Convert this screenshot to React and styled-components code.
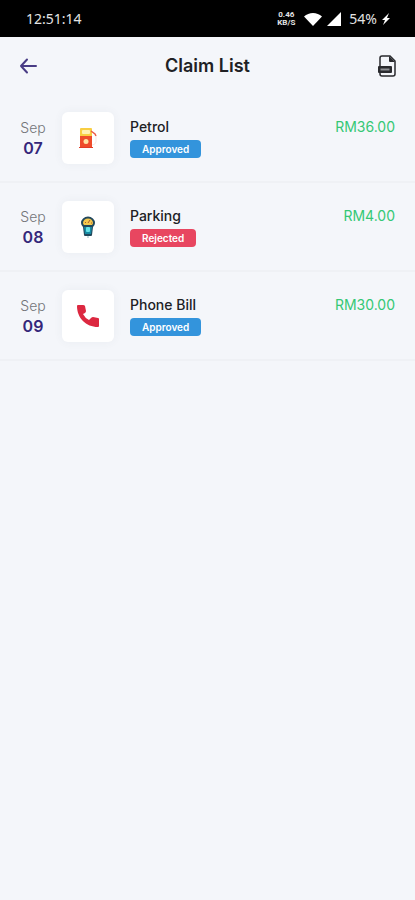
import React from "react";
import styled, { createGlobalStyle } from "styled-components";

const GlobalStyle = createGlobalStyle`
  * {
    box-sizing: border-box;
  }

  body {
    margin: 0;
    background-color: #f4f6fa;
    font-family: Inter, "Open Sans", sans-serif;
    color: #202124;
  }
`;

const Page = styled.div`
  min-height: 100vh;
  background-color: #f4f6fa;
`;

const StatusBar = styled.div`
  display: flex;
  align-items: center;
  justify-content: space-between;
  height: 37px;
  padding: 0 24px 0 26px;
  background-color: #000;
  color: #e4e4e4;
  font-family: "Noto Sans", sans-serif;
  font-size: 14px;
  line-height: 20px;
`;

const StatusIcons = styled.div`
  display: flex;
  align-items: center;
  gap: 4px;
`;

const Speed = styled.div`
  display: flex;
  flex-direction: column;
  align-items: center;
  margin-right: 4px;
  font-family: Roboto, sans-serif;
  font-size: 8px;
  font-weight: 700;
  line-height: 8px;
`;

const Battery = styled.span`
  margin-left: 4px;
`;

const Header = styled.header`
  display: grid;
  grid-template-columns: 24px 1fr 24px;
  align-items: center;
  height: 57px;
  padding: 0 16px;
`;

const Title = styled.h1`
  margin: 0;
  font-size: 18px;
  font-weight: 600;
  line-height: 24px;
  text-align: center;
`;

const IconButton = styled.button`
  display: flex;
  align-items: center;
  justify-content: center;
  width: 24px;
  height: 24px;
  padding: 0;
  border: none;
  background: none;
  cursor: pointer;
`;

const List = styled.ul`
  margin: 0;
  padding: 0;
  list-style: none;
`;

const Row = styled.li`
  display: flex;
  align-items: center;
  height: 89px;
  padding: 0 20px;
  border-bottom: 2px solid #eff1f5;
`;

const DateBox = styled.div`
  display: flex;
  flex-direction: column;
  align-items: center;
  width: 26px;
  margin-right: 16px;
  line-height: 20px;
`;

const Month = styled.span`
  color: #737579;
  font-size: 14px;
  font-weight: 300;
`;

const Day = styled.span`
  color: #35277a;
  font-size: 16px;
  font-weight: 600;
`;

const Tile = styled.div`
  display: flex;
  align-items: center;
  justify-content: center;
  width: 52px;
  height: 52px;
  margin-right: 16px;
  border-radius: 6px;
  background-color: #fff;
  box-shadow: 0 0 10px rgba(70, 80, 110, 0.06);
`;

const Info = styled.div`
  display: flex;
  flex: 1;
  flex-direction: column;
  align-items: flex-start;
  gap: 3px;
`;

const Name = styled.span`
  font-size: 14px;
  font-weight: 500;
  line-height: 20px;
`;

const Badge = styled.span`
  padding: 0 12px;
  border-radius: 4px;
  background-color: ${({ $status }) =>
    $status === "Approved" ? "#3394dc" : "#e84660"};
  color: #fff;
  font-size: 10px;
  font-weight: 600;
  line-height: 18px;
`;

const Amount = styled.span`
  align-self: flex-start;
  margin-top: 23px;
  color: #35c875;
  font-size: 14px;
  font-weight: 400;
  line-height: 20px;
`;

const WifiIcon = () => (
  <svg width="20" height="16" viewBox="0 0 20 16" fill="#fff">
    <path d="M1 5.5C6 .8 14 .8 19 5.5L10 15z" />
  </svg>
);

const SignalIcon = () => (
  <svg width="14" height="14" viewBox="0 0 14 14" fill="#fff">
    <path d="M14 0v14H0z" />
  </svg>
);

const BoltIcon = () => (
  <svg width="10" height="14" viewBox="0 0 10 14" fill="#fff">
    <path d="M8 1 1 8h3l-2 5 7-7H6z" />
  </svg>
);

const BackIcon = () => (
  <svg
    width="18"
    height="18"
    viewBox="0 0 18 18"
    fill="none"
    stroke="#493c85"
    strokeWidth="2"
    strokeLinecap="round"
    strokeLinejoin="round"
  >
    <path d="M8 2.500 2 9l6 6.500M2 9h15" />
  </svg>
);

const ReportIcon = () => (
  <svg width="20" height="22" viewBox="0 0 20 22" fill="none">
    <path
      d="M3 11V3q0-2 2-2h8l5 5v13q0 2-2 2H5q-2 0-2-2v-1"
      stroke="#292a2e"
      strokeWidth="1.5"
    />
    <path d="M12 1v5q0 1 1 1h5z" fill="#292a2e" />
    <rect x="1" y="11" width="14" height="7" rx="1" fill="#292a2e" />
    <path d="M3.5 14.500h9" stroke="#8f9094" strokeWidth="2" />
  </svg>
);

const PetrolIcon = () => (
  <svg width="20" height="22" viewBox="0 0 20 22" fill="none">
    <path d="M2 2q0-1 1-1h10q1 0 1 1v7H2z" fill="#f8ce43" />
    <rect x="4" y="3" width="8" height="4" rx="1" fill="#fff0b2" />
    <path d="M2 9h12v11H2z" fill="#ef4b2a" />
    <path d="M1 20h14v1H1z" fill="#e13b25" />
    <circle cx="8" cy="14.500" r="2.500" fill="#ffe2a2" />
    <path d="m13 4 4 3 1 2" stroke="#ec5a48" strokeWidth="1.500" />
    <path d="M18 9v6q-1 3-4 3" stroke="#f7e7e4" />
  </svg>
);

const ParkingIcon = () => (
  <svg width="16" height="22" viewBox="0 0 16 22" fill="none">
    <path
      d="M1 7a7 6.500 0 0 1 14 0q0 2-2 4l-1 8q0 1-1 1H5q-1 0-1-1l-1-8Q1 9 1 7z"
      fill="#22485c"
    />
    <path d="M3 7a5 4.500 0 0 1 10 0q0 1-1 2H4Q3 8 3 7z" fill="#f5c84c" />
    <path d="m8 7 2-3M5 6l1 1M11 7h1" stroke="#a75c33" />
    <path d="M4 11h8l-1 7H5z" fill="#168aa3" />
    <rect x="6" y="11" width="4" height="5" rx="1" fill="#65e2e8" />
    <path d="M8 20v2" stroke="#91b7c1" />
  </svg>
);

const PhoneIcon = () => (
  <svg width="24" height="24" viewBox="0 0 24 24" fill="#dc2840">
    <path d="M2 1h5q1.500 0 2 1l1 5q0 1-1 2l-2 1q2 4 6 6l2-2q1-1 2-1l5 1q1 0 1 1v7q0 1-1 1C10 23 1 14 1 2q0-1 1-1z" />
  </svg>
);

const claims = [
  {
    day: "07",
    name: "Petrol",
    status: "Approved",
    amount: "RM36.00",
    icon: <PetrolIcon />,
  },
  {
    day: "08",
    name: "Parking",
    status: "Rejected",
    amount: "RM4.00",
    icon: <ParkingIcon />,
  },
  {
    day: "09",
    name: "Phone Bill",
    status: "Approved",
    amount: "RM30.00",
    icon: <PhoneIcon />,
  },
];

const App = () => {
  return (
    <Page>
      <GlobalStyle />
      <StatusBar>
        <span>12:51:14</span>
        <StatusIcons>
          <Speed>
            <span>0.46</span>
            <span>KB/S</span>
          </Speed>
          <WifiIcon />
          <SignalIcon />
          <Battery>54%</Battery>
          <BoltIcon />
        </StatusIcons>
      </StatusBar>
      <Header>
        <IconButton type="button" aria-label="Back">
          <BackIcon />
        </IconButton>
        <Title>Claim List</Title>
        <IconButton type="button" aria-label="Export PDF">
          <ReportIcon />
        </IconButton>
      </Header>
      <List>
        {claims.map((claim) => (
          <Row key={claim.day}>
            <DateBox>
              <Month>Sep</Month>
              <Day>{claim.day}</Day>
            </DateBox>
            <Tile>{claim.icon}</Tile>
            <Info>
              <Name>{claim.name}</Name>
              <Badge $status={claim.status}>{claim.status}</Badge>
            </Info>
            <Amount>{claim.amount}</Amount>
          </Row>
        ))}
      </List>
    </Page>
  );
};

export default App;
